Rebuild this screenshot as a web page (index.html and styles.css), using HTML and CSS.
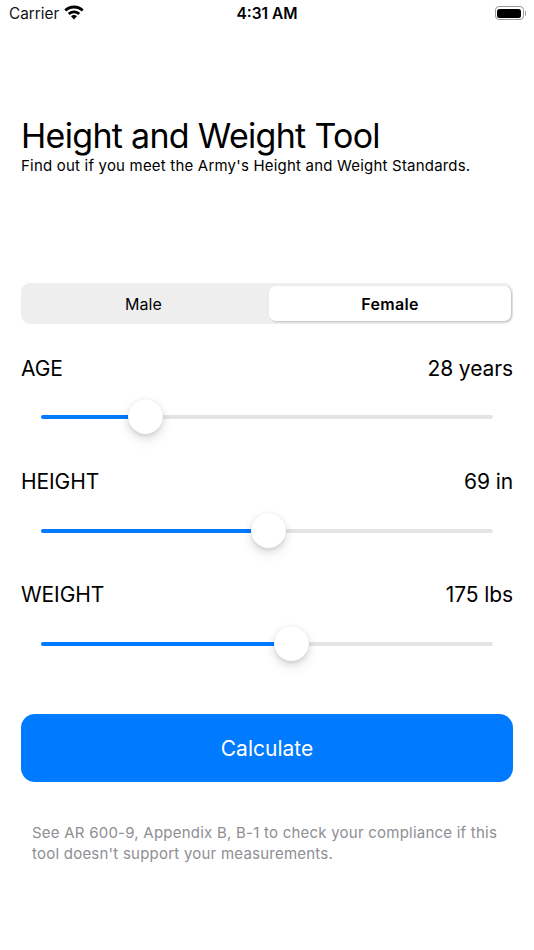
FILE: index.html
```html
<!DOCTYPE html>
<html lang="en">
<head>
<meta charset="utf-8">
<title>Height and Weight Tool</title>
<link rel="stylesheet" href="styles.css">
</head>
<body>
<div class="screen">
  <div class="status">
    <div class="status-left">
      <span>Carrier</span>
      <svg class="wifi" viewBox="0 0 20 15" width="20" height="15"><path d="M10 .6C6.200.6 2.800 2.100.3 4.500l2 2.100C4.300 4.700 7 3.500 10 3.500s5.700 1.200 7.700 3.100l2-2.100C17.200 2.100 13.800.6 10 .6z"/><path d="M10 5.400c-2.400 0-4.600.9-6.200 2.500l2 2.100c1.100-1 2.600-1.700 4.200-1.700s3.100.7 4.200 1.700l2-2.100c-1.600-1.600-3.800-2.500-6.200-2.500z"/><path d="M10 10.100c-1.200 0-2.200.4-3 1.200l3 3.100 3-3.100c-.8-.8-1.800-1.200-3-1.200z"/></svg>
    </div>
    <div class="status-time">4:31 AM</div>
    <div class="status-right">
      <div class="battery"><div class="battery-fill"></div></div>
      <div class="battery-cap"></div>
    </div>
  </div>

  <main class="content">
    <h1 class="title">Height and Weight Tool</h1>
    <p class="subtitle">Find out if you meet the Army's Height and Weight Standards.</p>

    <div class="segment">
      <div class="seg-item seg-male">Male</div>
      <div class="seg-item seg-active">Female</div>
    </div>

    <section class="field">
      <div class="field-head"><span>AGE</span><span>28 years</span></div>
      <div class="slider"><div class="track"><div class="fill" style="width:104px"></div><div class="thumb" style="left:104px"></div></div></div>
    </section>
    <section class="field">
      <div class="field-head"><span>HEIGHT</span><span>69 in</span></div>
      <div class="slider"><div class="track"><div class="fill" style="width:227px"></div><div class="thumb" style="left:227px"></div></div></div>
    </section>
    <section class="field">
      <div class="field-head"><span>WEIGHT</span><span>175 lbs</span></div>
      <div class="slider"><div class="track"><div class="fill" style="width:250px"></div><div class="thumb" style="left:250px"></div></div></div>
    </section>

    <button class="calc">Calculate</button>
    <p class="note">See AR 600-9, Appendix B, B-1 to check your compliance if this tool doesn't support your measurements.</p>
  </main>
</div>
</body>
</html>
```

FILE: styles.css
```css
* { box-sizing: border-box; }
html, body { margin: 0; padding: 0; background: #fff; }
body { font-family: Inter, "Liberation Sans", sans-serif; color: #000; }
.screen { width: 534px; height: 950px; overflow: hidden; }

.status { height: 26px; padding: 0 8px 0 9px; display: flex; align-items: center; justify-content: space-between; position: relative; font-size: 15.300px; }
.status-left { display: flex; align-items: center; gap: 5px; color: #111; }
.wifi { fill: #000; margin-top: -1px; }
.status-time { position: absolute; left: 0; right: 0; text-align: center; font-weight: 600; font-size: 15.500px; }
.status-right { display: flex; align-items: center; gap: 1px; }
.battery { width: 29px; height: 14px; border: 1px solid #9a9a9a; border-radius: 4px; padding: 1.500px; }
.battery-fill { width: 100%; height: 100%; background: #000; border-radius: 2.500px; }
.battery-cap { width: 1.500px; height: 5px; background: #9a9a9a; border-radius: 0 1px 1px 0; }

.content { padding: 0 21px; }
.title { margin: 89px 0 0; font-size: 34px; font-weight: 400; line-height: 41px; letter-spacing: -0.7px; }
.subtitle { margin: 0; font-size: 15px; line-height: 20px; letter-spacing: 0.2px; }

.segment { margin-top: 107px; height: 41px; background: #eeeeee; border-radius: 9px; padding: 3px 2px 3px 3px; display: flex; }
.seg-item { display: flex; align-items: center; justify-content: center; font-size: 16px; font-weight: 400; border-radius: 7px; }
.seg-male { flex: 1; padding-right: 6px; letter-spacing: 0.1px; }
.seg-active { flex: 0 0 242px; background: #fff; font-weight: 600; letter-spacing: 0.3px; box-shadow: 1px 1px 2px rgba(0,0,0,.2); }

.field { height: 113px; }
.field-head { display: flex; justify-content: space-between; align-items: center; height: 28px; font-size: 21px; letter-spacing: -0.1px; }
.segment + .field { margin-top: 30px; }
.slider { padding: 33px 20px 0; }
.field + .field .slider { padding-top: 34px; }
.track { position: relative; height: 4px; border-radius: 2px; background: #e4e4e4; }
.fill { height: 4px; border-radius: 2px; background: #007aff; }
.thumb { position: absolute; top: -16.500px; width: 35px; height: 35px; margin-left: -17.500px; border-radius: 50%; background: #fff; box-shadow: 0 3px 1px rgba(0,0,0,.03), 0 3px 8px rgba(0,0,0,.12), 0 8px 14px rgba(0,0,0,.05), 0 0 1px rgba(0,0,0,.14); }

.calc { display: block; width: 100%; height: 68px; margin-top: 21px; border: 0; border-radius: 14px; background: #007aff; color: #fff; font-family: inherit; font-size: 21px; }
.note { margin: 40px 0 0; padding: 0 11px; font-size: 15px; line-height: 21px; letter-spacing: 0.23px; color: #8e8e93; }
```
